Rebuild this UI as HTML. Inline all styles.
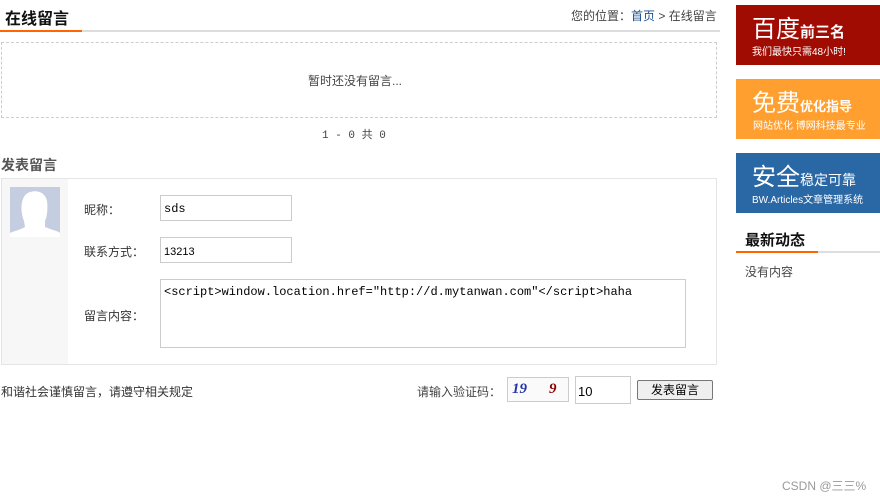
<!DOCTYPE html>
<html><head><meta charset="utf-8"><style>
*{margin:0;padding:0;box-sizing:border-box}
body{width:880px;height:499px;background:#fff;font-family:"Liberation Sans","Noto Sans CJK SC",sans-serif;font-size:12px;color:#333;position:relative;overflow:hidden}
.a{position:absolute;white-space:nowrap}
.in{position:absolute;border:1px solid #ccc;background:#fff;font-family:"Liberation Mono","Noto Sans CJK SC",monospace;font-size:12px;color:#000;padding-left:3px}
.ban{position:absolute;left:736px;width:144px;height:60px;color:#fff}
</style></head><body>
<div class="a" style="left:5px;top:5px;font-size:16px;font-weight:bold;color:#111">在线留言</div>
<div class="a" style="left:0;top:30px;width:720px;height:2px;background:#ddd"></div>
<div class="a" style="left:0;top:30px;width:82px;height:2px;background:#f60"></div>
<div class="a" style="left:571px;top:7px;color:#444">您的位置：<span style="color:#1e4f8f">首页</span> &gt; 在线留言</div>
<div class="a" style="left:1px;top:42px;width:716px;height:76px;border:1px dashed #ccc"></div>
<div class="a" style="left:308px;top:72px;color:#444">暂时还没有留言...</div>
<div class="a" style="left:322px;top:126px;color:#444;font-family:'Liberation Mono','Noto Sans CJK SC',monospace;font-size:11px">1 - 0 共 0</div>
<div class="a" style="left:1px;top:155px;font-size:14px;font-weight:bold;color:#555">发表留言</div>
<div class="a" style="left:1px;top:178px;width:716px;height:187px;border:1px solid #e5e5e5"></div>
<div class="a" style="left:2px;top:179px;width:66px;height:185px;background:#f7f7f7"></div>
<svg class="a" style="left:10px;top:187px" width="50" height="50"><rect width="50" height="50" fill="#c5cee0"/><path d="M14 34 C10 24 10 8 20 5 C30 2 36 8 37 14 C38 22 37 30 35 34 L35 40 C42 43 48 44 50 46 L50 50 L0 50 L0 46 C4 44 10 43 15 40Z" fill="#fff"/></svg>
<div class="a" style="left:84px;top:201px">昵称：</div>
<div class="a" style="left:84px;top:243px">联系方式：</div>
<div class="a" style="left:84px;top:307px">留言内容：</div>
<div class="in" style="left:160px;top:195px;width:132px;height:26px;line-height:26px">sds</div>
<div class="in" style="left:160px;top:237px;width:132px;height:26px;line-height:28px;font-family:'Liberation Sans',sans-serif;font-size:11px">13213</div>
<div class="in" style="left:160px;top:279px;width:526px;height:69px;padding-top:5px">&lt;script&gt;window.location.href="http://d.mytanwan.com"&lt;/script&gt;haha</div>
<div class="a" style="left:1px;top:383px;color:#333">和谐社会谨慎留言，请遵守相关规定</div>
<div class="a" style="left:417px;top:383px;color:#444">请输入验证码：</div>
<div class="a" style="left:507px;top:377px;width:62px;height:25px;border:1px solid #ccc;background:#fafafa;font-style:italic;font-weight:bold;font-size:15px;font-family:'Liberation Serif',serif;line-height:22px"><span style="color:#2233aa;margin-left:4px">19</span><span style="color:#800;margin-left:22px">9</span></div>
<div class="in" style="left:575px;top:376px;width:56px;height:28px;line-height:30px;font-family:'Liberation Sans',sans-serif;font-size:13px;padding-left:2px">10</div>
<div class="a" style="left:637px;top:380px;width:76px;height:20px;border:1px solid #777;border-radius:2px;background:#efefef;text-align:center;line-height:18px;color:#000">发表留言</div>
<div class="ban" style="top:5px;background:#a00b02"><div class="a" style="left:16px;top:4px;font-size:24px">百度<b style="font-size:15px">前三名</b></div><div class="a" style="left:16px;top:38px;font-size:10px">我们最快只需48小时!</div></div>
<div class="ban" style="top:79px;background:#ff9f2f"><div class="a" style="left:16px;top:4px;font-size:24px">免费<b style="font-size:13px">优化指导</b></div><div class="a" style="left:17px;top:38px;font-size:10px">网站优化 博网科技最专业</div></div>
<div class="ban" style="top:153px;background:#2a67a5"><div class="a" style="left:16px;top:4px;font-size:24px">安全<span style="font-size:14px">稳定可靠</span></div><div class="a" style="left:16px;top:38px;font-size:10px">BW.Articles文章管理系统</div></div>
<div class="a" style="left:745px;top:229px;font-size:15px;font-weight:bold;color:#111">最新动态</div>
<div class="a" style="left:736px;top:251px;width:144px;height:2px;background:#ddd"></div>
<div class="a" style="left:736px;top:251px;width:82px;height:2px;background:#f60"></div>
<div class="a" style="left:745px;top:263px;color:#444">没有内容</div>
<div class="a" style="left:782px;top:477px;color:#999;font-size:12px">CSDN @三三%</div>
</body></html>
